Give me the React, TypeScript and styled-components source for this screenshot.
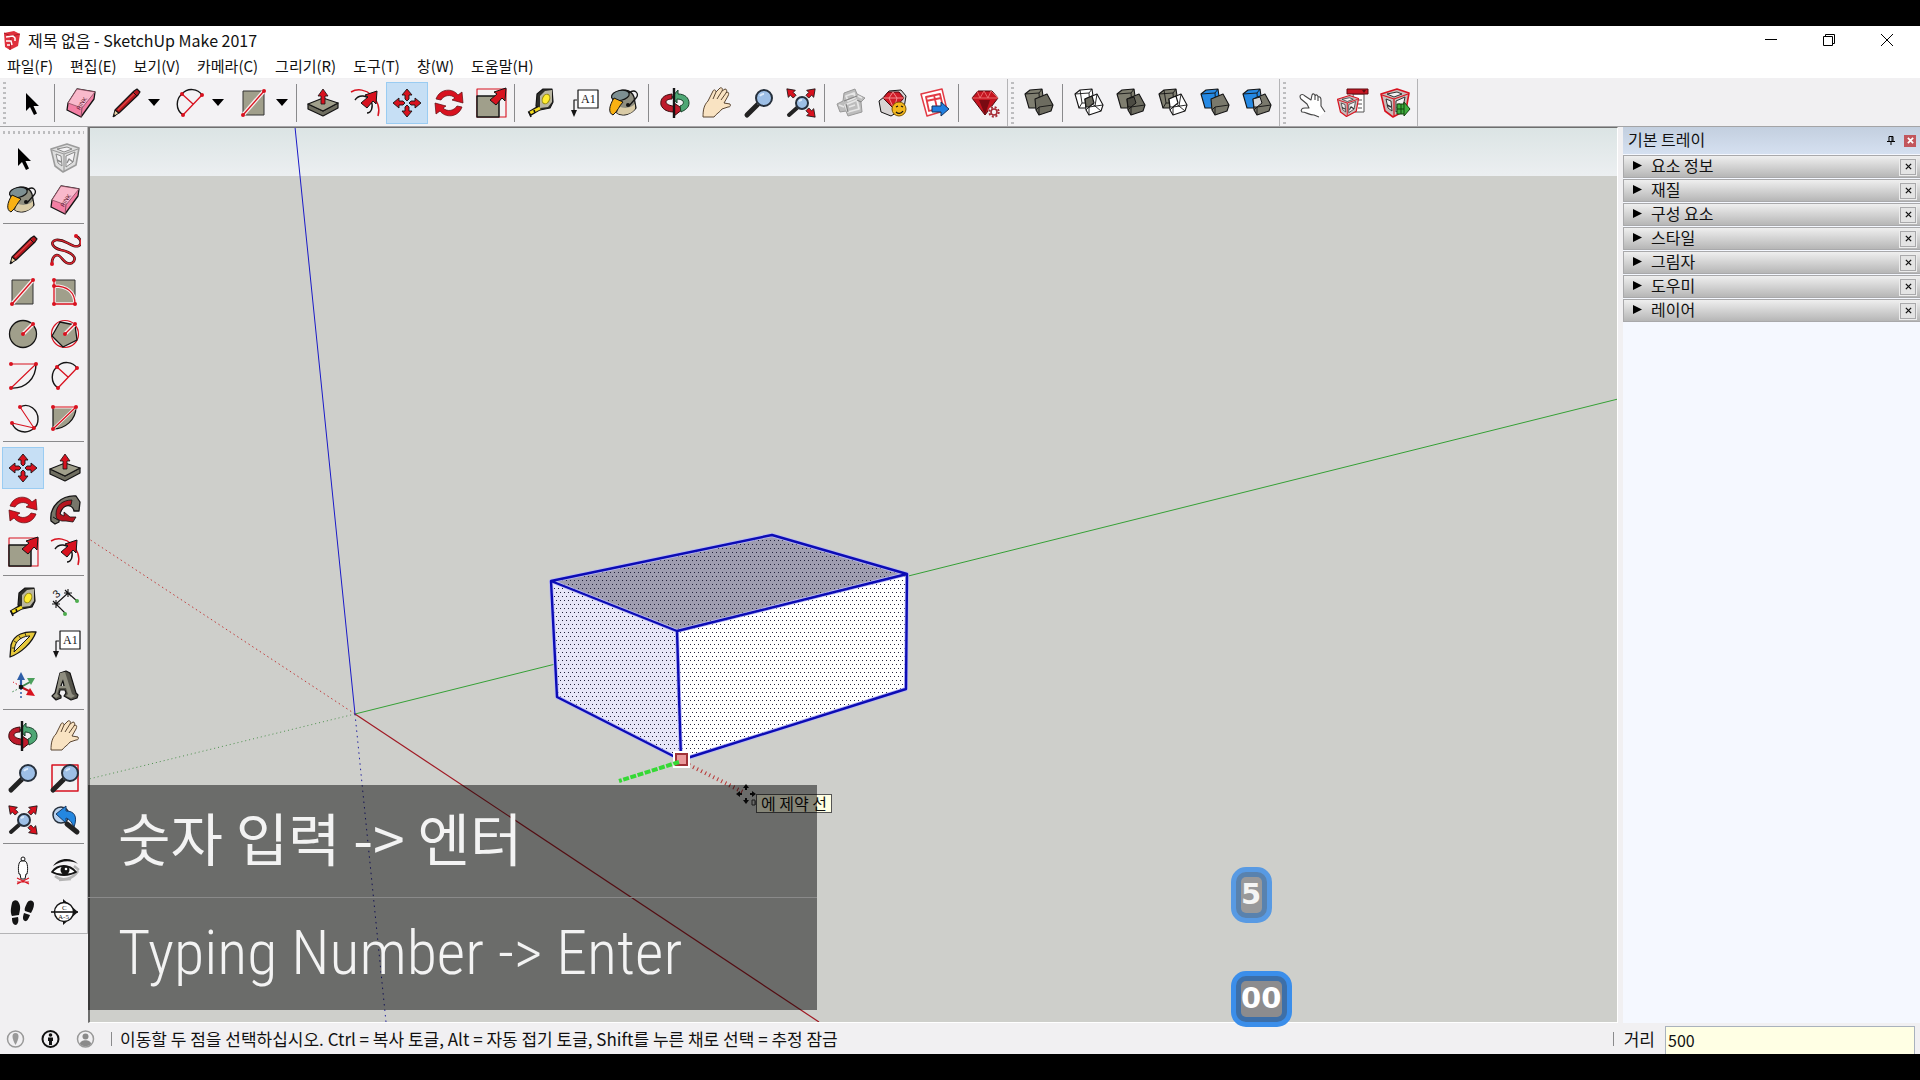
import React from "react";
import styled, { createGlobalStyle, css } from "styled-components";

const Global = createGlobalStyle`
  * { box-sizing: border-box; }
  body { margin: 0; background: #000; }
  button, input { font: inherit; color: inherit; }
  button { border: 0; padding: 0; background: none; }
`;

const UI = `"Noto Sans CJK KR", "Noto Sans", sans-serif`;

const Screen = styled.div`
  display: flex;
  flex-direction: column;
  min-height: 100vh;
  padding: 26px 0;
  background: #000;
  font-family: ${UI};
  font-size: 16px;
  color: #111;
`;
const Window = styled.div`
  display: flex;
  flex-direction: column;
  flex: 1;
  background: #f1f0f2;
`;

/* title and menu */
const TitleBar = styled.header`
  display: flex;
  align-items: center;
  height: 28px;
  padding: 0 4px 0 3px;
  background: #fff;
`;
const AppName = styled.h1`
  flex: 1;
  margin: 0 0 0 7px;
  font-size: 16px;
  line-height: 28px;
  font-weight: 400;
`;
const WindowButtons = styled.div`
  display: flex;
`;
const WindowButton = styled.button`
  display: grid;
  place-items: center;
  width: 58px;
  height: 28px;
`;
const MenuBar = styled.nav`
  display: flex;
  gap: 17px;
  height: 24px;
  padding-left: 7px;
  background: #fff;
`;
const MenuItem = styled.button`
  font-size: 15px;
  line-height: 24px;
  white-space: nowrap;
`;

/* toolbar */
const ToolBar = styled.div`
  display: flex;
  height: 49px;
  padding-top: 1px;
  border-bottom: 1px solid #a4a4a6;
`;
const BarGroup = styled.div`
  display: flex;
  align-items: center;
  padding: 0 1px 0 3px;
  background: #f3f2f4;
  border-right: 1px solid #b4b4b6;
`;
const Grip = styled.span<{ $wide?: boolean }>`
  flex: none;
  ${(p) =>
    p.$wide
      ? css`
          height: 3px;
          margin: 4px 3px 3px;
          background: repeating-linear-gradient(90deg, #bdbdbf 0 2px, transparent 2px 5px);
        `
      : css`
          width: 3px;
          height: 42px;
          margin-right: 4px;
          background: repeating-linear-gradient(180deg, #bdbdbf 0 2px, transparent 2px 5px);
        `}
`;
const Divider = styled.span<{ $across?: boolean }>`
  flex: none;
  background: #8a8a8c;
  ${(p) =>
    p.$across
      ? css`
          height: 1px;
          margin: 2px 3px 5px;
        `
      : css`
          width: 1px;
          height: 38px;
          margin: 0 5px 0 2px;
        `}
`;
const Tool = styled.button<{ $on?: boolean }>`
  display: grid;
  place-items: center;
  flex: none;
  width: 42px;
  height: 42px;
  border: 1px solid ${(p) => (p.$on ? "#9accf2" : "transparent")};
  background: ${(p) => (p.$on ? "#c6dff5" : "transparent")};
`;
const DropTool = styled.button`
  display: flex;
  align-items: center;
  flex: none;
  gap: 6px;
  width: 64px;
  height: 42px;
  padding-left: 8px;
`;

/* work area */
const Work = styled.div`
  display: flex;
  flex: 1;
`;
const Side = styled.aside`
  width: 88px;
`;
const ToolBox = styled.div`
  display: flex;
  flex-direction: column;
  background: #f3f2f4;
  border-right: 1px solid #b4b4b6;
  border-bottom: 1px solid #b4b4b6;
`;
const ToolGrid = styled.div`
  display: grid;
  grid-template-columns: 42px 42px;
  padding-left: 2px;
`;
const Scene = styled.main`
  position: relative;
  flex: 1;
  margin-right: 5px;
  border: solid;
  border-width: 1px 1px 1px 2px;
  border-color: #6e6e6e #fff #fff #6e6e6e;
  background: #cecfcb;
`;
const SceneDrawing = styled.svg`
  position: absolute;
  inset: 0;
  width: 100%;
  height: 100%;
`;
const Hint = styled.div`
  position: absolute;
  left: 666px;
  top: 666px;
  height: 19px;
  padding: 0 4px;
  border: 1px solid #555;
  background: #ffffe4;
  font-size: 16px;
  line-height: 16px;
`;
const Caption = styled.div`
  position: absolute;
  left: -2px;
  bottom: 12px;
  width: 729px;
  background: rgba(0, 0, 0, 0.48);
  color: #f3f3f3;
`;
const CaptionLine = styled.p<{ $latin?: boolean }>`
  margin: 0;
  height: 112px;
  padding-left: 30px;
  font: 400 57px/102px "Noto Sans CJK KR", sans-serif;
  white-space: nowrap;
  ${(p) =>
    p.$latin &&
    css`
      height: 113px;
      border-top: 1px solid #8a8a8a;
      font: 300 62px/110px "Roboto Condensed", sans-serif;
    `}
`;
const Keys = styled.div`
  position: absolute;
  left: 1141px;
  top: 739px;
  display: flex;
  flex-direction: column;
  align-items: flex-start;
  gap: 48px;
`;
const Key = styled.kbd<{ $faded?: boolean }>`
  padding: 5px;
  border: 5px solid #3b8eea;
  border-radius: 15px;
  background: #3d6fa8;
  opacity: ${(p) => (p.$faded ? 0.8 : 1)};
  span {
    display: block;
    height: 36px;
    padding-right: 1px;
    border-radius: 5px;
    background: #8c8c8e;
    color: #fff;
    font: 700 29px/34px "DejaVu Sans", sans-serif;
  }
`;

/* tray */
const Tray = styled.aside`
  width: 297px;
  background: #f5f8ff;
`;
const TrayHead = styled.div`
  display: flex;
  align-items: center;
  height: 27px;
  margin: 0 0 1px;
  padding: 0 4px 0 5px;
  background: linear-gradient(#c3cfdf, #d5e0f0);
`;
const TrayName = styled.h2`
  flex: 1;
  margin: 0;
  padding-bottom: 3px;
  font-size: 16px;
  line-height: 24px;
  font-weight: 400;
`;
const TrayButton = styled.button<{ $red?: boolean }>`
  display: grid;
  place-items: center;
  width: 12px;
  height: 12px;
  margin-left: 7px;
  background: ${(p) => (p.$red ? "#c2565c" : "transparent")};
`;
const Panel = styled.div`
  display: flex;
  align-items: center;
  height: 23px;
  margin-bottom: 1px;
  padding-right: 4px;
  border: 1px solid #a9a9ab;
  border-width: 1px 0 1px 1px;
  background: linear-gradient(#efefef, #b6b6b6);
`;
const PanelToggle = styled.button`
  display: flex;
  align-items: center;
  flex: 1;
  gap: 9px;
  padding: 0 0 3px 9px;
  font-size: 16px;
  line-height: 18px;
`;
const PanelClose = styled.button`
  display: grid;
  place-items: center;
  width: 16px;
  height: 16px;
  border: 1px solid #a9a9ab;
  outline: 1px solid #ededed;
  background: #e4e4e4;
`;

/* status */
const StatusBar = styled.footer`
  display: flex;
  align-items: center;
  height: 31px;
  padding: 0 5px 0 6px;
`;
const StatusButton = styled.button`
  width: 19px;
  height: 20px;
  margin-right: 16px;
`;
const StatusText = styled.span`
  flex: 1;
  padding-left: 8px;
  font-size: 17px;
  line-height: 30px;
  white-space: nowrap;
`;
const StatusRule = styled.span`
  width: 1px;
  height: 14px;
  background: #8a8a8c;
`;
const Measure = styled.label`
  display: flex;
  align-items: center;
  gap: 10px;
  margin-left: 10px;
  font-size: 17px;
`;
const MeasureBox = styled.input`
  width: 250px;
  height: 28px;
  margin-top: 3px;
  padding: 0 2px 2px;
  border: 1px solid #a9b2bd;
  border-bottom: 0;
  background: #ffffe4;
  font-size: 16px;
`;

const R = "#d8121f";
const K = "#141414";
const G = "#a09f8b";

function Svg({ children, size = 32 }: { children: React.ReactNode; size?: number }) {
  return (
    <svg width={size} height={size} viewBox="-16 -16 32 32" aria-hidden="true" fill="none" strokeLinejoin="round">
      {children}
    </svg>
  );
}
const Dots = ({ at }: { at: [number, number][] }) => (
  <>
    {at.map(([x, y], i) => (
      <circle key={i} cx={x} cy={y} r="2" fill={R} />
    ))}
  </>
);
const DiagArrow = ({ x = 0, y = 0 }) => (
  <path
    transform={`translate(${x} ${y})`}
    d="M0 0 L-12 4 L-9 6 L-16 12 L-10 17 L-4 10 L-1 13 Z"
    fill={R}
    stroke={K}
    strokeWidth="1"
  />
);
const Lens = ({ x = 5, y = -5, r = 8, w = 5 }) => (
  <>
    <path d={`M${x - r * 0.8} ${y + r * 0.8} L-12 12`} stroke="#222" strokeWidth={w} strokeLinecap="round" />
    <path d={`M${x - r * 0.8} ${y + r * 0.8} l3 -3`} stroke="#999" strokeWidth="2" />
    <circle cx={x} cy={y} r={r} fill="#9dbfe6" stroke="#26303c" strokeWidth="2" />
    <path d={`M${x - r / 2} ${y - r / 4} A${r / 2} ${r / 2} 0 0 1 ${x} ${y - r / 2}`} stroke="#d9e9fa" strokeWidth="2" />
  </>
);
const SmallArrow = ({ turn }: { turn: number }) => (
  <path transform={`rotate(${turn})`} d="M0 -20 L-5 -13 L-2 -13 V-9 H2 V-13 L5 -13 Z" fill={R} stroke={K} strokeWidth=".8" />
);
const Frame = ({ red = R, fill = "#c9bdbb", dark = "#333", s = 1, x = 0, y = 0 }) => (
  <g transform={`translate(${x} ${y}) scale(${s})`}>
    <path d="M-14 -9 L2 -14 L14 -10 L11 7 L-2 14 L-10 8 Z" fill={fill} stroke={red} strokeWidth="1.6" />
    <path d="M-8 -9 L2 -11 L7 -9 L-1 -6 Z M-9 -4 L-4 -2 L-3 8 L-7 5 Z M1 -2 L10 -6 L8 4 L1 9 Z" fill="#f3f2f4" stroke={dark} />
    <path d="M-13 -8 L-1 -4 L13 -9 M-1 -4 L-1 13" stroke={red} strokeWidth="1.2" />
    <path d="M2 5 L4 1 L8 4 M-8 2 L-4 4" stroke={dark} strokeWidth="1.4" />
  </g>
);
const Solids = ({ a, b, mid }: { a: string; b: string; mid?: string }) => (
  <>
    <path d="M-14 -9 L-9 -13 L3 -14 L5 0 L1 5 L-10 5 Z" fill={a} stroke={K} strokeWidth="1.1" />
    <path d="M-14 -9 L0 -10 L3 -14 M0 -10 L1 5" stroke={K} strokeWidth=".9" />
    <path d="M-4 -4 L8 -9 L14 2 L12 8 L0 12 L-3 7 Z" fill={b} stroke={K} strokeWidth="1.1" />
    <path d="M-3 7 L0 4 L14 2 M0 4 L0 12" stroke={K} strokeWidth=".9" />
    {mid && <path d="M-4 -4 L3 -6 L5 0 L0 4 L-3 4 Z" fill={mid} stroke={K} strokeWidth="1" />}
  </>
);
/* two overlapping blocks, one or both drawn as wire frames */
const WireSolids = ({ solid = false }: { solid?: boolean }) => (
  <>
    <path d="M-14 -9 L-9 -13 L3 -14 L5 0 L1 5 L-10 5 Z" fill={solid ? "#7f7e70" : "#fff"} stroke={K} strokeWidth="1.1" />
    <path d="M-14 -9 L0 -10 L3 -14 M0 -10 L1 5 M-9 -13 L-7 0 L5 0 M-7 0 L-10 5" stroke={K} strokeWidth=".9" />
    <path d="M-4 -4 L8 -9 L14 2 L12 8 L0 12 L-3 7 Z" fill="#fff" stroke={K} strokeWidth="1.1" />
    <path d="M-3 7 L0 4 L14 2 M0 4 L0 12 M0 4 L-4 -4 M8 -9 L6 3 L12 8 M-4 -4 L6 3" stroke={K} strokeWidth=".9" />
    <path d="M-4 -4 L3 -7 L5 0 L0 4 L-3 4 Z" fill={solid ? "#fff" : "#6b6a5f"} stroke={K} strokeWidth="1.2" />
  </>
);

const icons: Record<string, React.ReactNode> = {
  select: <path d="M-5 -10 V8 L-1 4 L3 12 L6 10.5 L2.5 3 H8 Z" fill="#000" />,
  eraser: (
    <>
      <path d="M-4 -14 L14 -11 L13 -4 L0 14 L-14 7 L-13 0 Z" fill="#f27fa4" stroke={K} strokeWidth="1.3" />
      <path d="M-4 -14 L14 -11 L1 5 L-13 0 Z" fill="#f9b9cb" stroke="#8c4c5f" strokeWidth=".8" />
      <path d="M1 5 L0 14" stroke="#8c4c5f" />
      <text x="-7" y="3" transform="rotate(-58)" fontSize="6" fontFamily="Liberation Sans, sans-serif" fill="#5a1830">
        PINK
      </text>
    </>
  ),
  pencil: (
    <>
      <path d="M-13 14 L-11 7 L-7 10 Z" fill="#e8d2a6" stroke={K} />
      <path d="M-11 7 L8 -12 L11 -14 L14 -11 L12 -8 L-7 10 Z" fill="#b3161c" stroke={K} strokeWidth="1.2" />
      <path d="M-8 7 L9 -10" stroke="#e04545" strokeWidth="1.2" />
      <path d="M-13 14 L-12 11 L-10 13 Z" fill={K} />
      <path d="M7 -11 L11 -7" stroke={K} />
    </>
  ),
  freehand: (
    <>
      <path
        d="M11 -14 C18 -10 17 -2 9 -4 C2 -6 -1 -11 -9 -10 C-16 -8 -12 -2 -4 0 C6 2 14 8 7 13 C-1 16 -3 5 -8 5 C-12 6 -13 10 -13 13"
        stroke="#3b0a0c"
        strokeWidth="2.6"
      />
      <path
        d="M11 -14 C18 -10 17 -2 9 -4 C2 -6 -1 -11 -9 -10 C-16 -8 -12 -2 -4 0 C6 2 14 8 7 13 C-1 16 -3 5 -8 5 C-12 6 -13 10 -13 13"
        stroke="#d62630"
        strokeWidth="1.4"
      />
      <Dots at={[[11, -14], [-13, 14]]} />
    </>
  ),
  rect: (
    <>
      <path d="M-11 -12 H10 V12 H-11 Z" fill={G} stroke="#333" />
      <path d="M-11 12 L10 -12" stroke="#f8eeee" strokeWidth="4" />
      <path d="M-11 12 L10 -12" stroke={R} strokeWidth="1.3" />
      <Dots at={[[-11, 12], [10, -12]]} />
    </>
  ),
  rotrect: (
    <>
      <path d="M-11 -12 H10 V12 H-11 Z" fill={G} stroke="#333" />
      <path d="M-11 -12 V12 H10 M-11 -6 C2 -6 10 0 10 12" stroke="#f8eeee" strokeWidth="3.5" />
      <path d="M-11 -12 V12 H10 M-11 -6 C2 -6 10 0 10 12" stroke={R} strokeWidth="1.3" />
      <Dots at={[[-11, -12], [-11, -6], [-11, 12], [10, 12]]} />
    </>
  ),
  circle: (
    <>
      <circle r="13.5" fill={G} stroke={K} strokeWidth="1.3" />
      <path d="M0 0 L10 -10" stroke="#f8eeee" strokeWidth="4" />
      <path d="M0 0 L10 -10" stroke={R} strokeWidth="1.3" />
      <Dots at={[[0, 0], [10, -10]]} />
    </>
  ),
  polygon: (
    <>
      <circle r="13.5" stroke={R} strokeWidth="1.2" />
      <path d="M-5 -12 L10 -9 L12 6 L-2 13 L-13 2 Z" fill={G} stroke={K} strokeWidth="1.3" />
      <path d="M0 0 L10 -10" stroke="#f8eeee" strokeWidth="4" />
      <path d="M0 0 L10 -10" stroke={R} strokeWidth="1.3" />
      <Dots at={[[0, 0], [10, -10]]} />
    </>
  ),
  arc: (
    <>
      <path d="M-12 12 C2 13 13 3 13 -12" stroke={K} strokeWidth="1.4" />
      <path d="M-12 -12 H13 L-12 12" stroke={R} strokeWidth="1.1" />
      <Dots at={[[-12, -12], [13, -12], [-12, 12]]} />
    </>
  ),
  arc2: (
    <>
      <path d="M-7 12 C-15 6 -14 -4 -8 -9 C-2 -16 8 -14 12 -8" stroke={K} strokeWidth="1.4" />
      <path d="M12 -8 L-7 12 M-8 -9 L3 1" stroke={R} strokeWidth="1.3" />
      <Dots at={[[-8, -9], [12, -8], [-7, 12]]} />
    </>
  ),
  arc3: (
    <>
      <path d="M-3 -11 C6 -16 15 -8 15 1 C15 5 14 8 11 10 C4 17 -8 14 -11 5" stroke={K} strokeWidth="1.4" />
      <path d="M-3 -11 L11 10 L-11 5" stroke={R} strokeWidth="1.1" />
      <Dots at={[[-3, -11], [11, 10], [-11, 5]]} />
    </>
  ),
  pie: (
    <>
      <path d="M-12 -11 H11 C11 2 0 11 -12 11 Z" fill={G} stroke={K} strokeWidth="1.2" />
      <path d="M-12 -11 H11 L-12 11" stroke="#f8eeee" strokeWidth="3" />
      <path d="M-12 -11 H11 L-12 11" stroke={R} strokeWidth="1.2" />
      <Dots at={[[-12, -11], [11, -11], [-12, 11]]} />
    </>
  ),
  move: (
    <>
      {[0, 90, 180, 270].map((t) => (
        <path key={t} transform={`rotate(${t})`} d="M0 -14 L-5 -8 H-2 V-4 L0 -2 L2 -4 V-8 H5 Z" fill={R} stroke={K} strokeWidth=".9" />
      ))}
    </>
  ),
  push: (
    <>
      <path d="M-15 1 L0 8 L15 0 V5 L0 13 L-15 6 Z" fill="#6f6e60" stroke={K} strokeWidth="1.2" />
      <path d="M-15 1 L0 -5 L15 0 L0 8 Z" fill={G} stroke={K} strokeWidth="1.2" />
      <path d="M0 -14 L-5 -7 H-2 V1 H2 V-7 H5 Z" fill={R} stroke={K} strokeWidth=".8" />
    </>
  ),
  rotate: (
    <>
      {[0, 180].map((t) => (
        <path
          key={t}
          transform={`rotate(${t})`}
          d="M-13 -4 C-9 -15 4 -15 9 -8 L13 -11 L14 0 L3 -3 L6 -5 C2 -9 -5 -8 -8 -3 Z"
          fill={R}
          stroke="#5a0a0e"
          strokeWidth=".7"
        />
      ))}
    </>
  ),
  follow: (
    <>
      <path d="M-14 11 C-16 -4 -3 -15 11 -14 L15 -8 L14 1 L9 1 C8 -4 4 -5 1 -4 C-4 -2 -6 4 -6 12 L-10 14 Z" fill="#77766a" stroke={K} strokeWidth="1.3" />
      <path d="M-9 4 C-9 -5 -2 -10 7 -10 L6 -5 C0 -5 -4 -2 -5 4 L-1 6 L-1 2 L5 7 L11 7 L8 12 L1 11 L-3 11 C-8 10 -9 8 -9 4 Z" fill="#b5151f" stroke={K} strokeWidth=".8" />
      <path d="M-12 7 L-7 10" stroke={K} />
    </>
  ),
  scale: (
    <>
      <path d="M-14 -14 H15 V14 H-14 Z" stroke={R} strokeWidth="1.1" />
      <path d="M-14 -7 H8 V14 H-14 Z" fill={G} stroke={K} strokeWidth="1.5" />
      <DiagArrow x={15} y={-15} />
    </>
  ),
  offset: (
    <>
      <path d="M-14 -11 C0 -19 18 -3 13 13" stroke={R} strokeWidth="1.5" />
      <path d="M-10 -3 C-6 -9 2 -8 6 -2 C9 4 6 10 2 10" stroke={K} strokeWidth="1.4" />
      <DiagArrow x={12} y={-12} />
    </>
  ),
  tape: (
    <>
      <path d="M-4 -9 L2 -14 L11 -14 L12 -1 L9 5 L-1 7 L-5 3 Z" fill="#2e2e2a" stroke={K} strokeWidth="1.2" />
      <path d="M-1 -7 L4 -12 L11 -13 L11 -1 L7 4 L-1 5 Z" fill="#b9b6a2" />
      <ellipse cx="5" cy="-4" rx="3.5" ry="5" fill="#ffec2e" stroke="#9a8d0c" transform="rotate(25 5 -4)" />
      <path d="M-2 5 L-12 11" stroke={K} strokeWidth="5" />
      <path d="M-1 5 L-11 10" stroke="#f5dd1e" strokeWidth="3" />
      <path d="M-12 9 L-10 14 M-7 7 l1 3" stroke={K} strokeWidth="1.6" />
    </>
  ),
  dim: (
    <>
      <path d="M-9 2 L3 -9 M-9 2 L0 11 M3 -9 L12 -1 M-13 2 H-5 M-12 -1 L-6 5 M-9 -2 V6 M-1 -9 H7 M0 -12 L6 -6 M3 -13 V-5" stroke={K} strokeWidth="1.1" />
      <circle cx="0" cy="12" r="2" fill="#4eae4e" />
      <circle cx="12" cy="-1" r="2" fill="#4eae4e" />
      <text x="-12" y="-5" transform="rotate(-40 -8 -9)" fontSize="11" fontFamily="Liberation Sans, sans-serif" fill={K}>
        3
      </text>
    </>
  ),
  protractor: (
    <>
      <path d="M-13 13 L-12 1 C-9 -10 2 -13 13 -12 C9 -1 -2 9 -13 13 Z" fill="#e6c93b" stroke={K} strokeWidth="1.3" />
      <path d="M-9 8 L-8 2 C-6 -5 1 -8 7 -8 Z" fill="#f3f2f4" stroke={K} strokeWidth="1" />
      <path d="M-11 4 l3 0 M-9 -3 l3 2 M-4 -8 l2 3 M2 -11 l1 3" stroke={K} strokeWidth=".8" />
    </>
  ),
  text: (
    <>
      <path d="M-6 -3 H-9 V9" stroke={K} strokeWidth="1.2" />
      <path d="M-12 7 H-6 L-9 14 Z" fill={K} />
      <path d="M-5 -13 H15 V5 H-5 Z" fill="#fff" stroke={K} strokeWidth="1.2" />
      <text x="-2" y="0" fontSize="12" fontFamily="Liberation Serif, serif" fill={K}>
        A1
      </text>
    </>
  ),
  axes: (
    <>
      <path d="M-2 1 V-10" stroke="#2f5fa8" strokeWidth="2.2" />
      <path d="M-2 -14 L-6 -6 H2 Z" fill="#2f5fa8" />
      <path d="M-2 1 L7 -4" stroke="#3d8a4d" strokeWidth="2" />
      <path d="M12 -8 L4 -8 L8 -1 Z" fill="#4ba05c" />
      <path d="M-2 1 L6 5" stroke="#c01720" strokeWidth="2" />
      <path d="M12 10 L7 2 L3 9 Z" fill={R} />
      <path d="M-3 0 L-10 -4" stroke={R} strokeDasharray="1.5 2" />
      <path d="M-3 2 L-11 6" stroke="#3d8a4d" strokeDasharray="1.5 2" />
      <path d="M-2 2 V12" stroke="#2f5fa8" strokeWidth="1.5" strokeDasharray="2 2" />
      <circle cx="-2" cy="1" r="2.3" fill={K} />
    </>
  ),
  text3d: (
    <>
      <path
        fillRule="evenodd"
        d="M-5 -13 L1 -15 L5 -13 L11 7 L13 9 L12 12 L6 14 L-1 10 L1 7 L0 4 L-5 4 L-6 8 L-4 10 L-4 12 L-9 14 L-13 10 L-10 7 Z M-2 -6 L-4 0 L-1 1 Z"
        fill="#55544b"
        stroke={K}
        strokeWidth="1.2"
      />
      <path fillRule="evenodd" d="M-5 -13 L0 -14 L7 8 L10 10 L6 12 L1 10 L3 8 L1 2 L-6 2 L-8 8 L-6 10 L-9 12 L-12 10 L-9 7 Z M-2 -7 L-5 0 L0 0 Z" fill="#8f8e80" />
    </>
  ),
  orbit: (
    <>
      <path d="M-3 -9 C-12 -8 -15 -4 -14 2 C-12 7 -7 9 -1 9 V13 L8 6 L-1 0 V3 C-5 3 -9 1 -9 -1 C-9 -3 -6 -4 -3 -4 Z" fill="#bd1a2a" stroke="#3b0a0c" />
      <path d="M3 -9 C10 -9 14 -5 14 0 C14 5 10 7 6 9 L5 3 C8 2 9 0 8 -2 C7 -3 5 -4 2 -4 V0 L-3 -6 L3 -13 Z" fill="#4ea774" stroke="#173f28" />
      <path d="M-1 -15 V15" stroke={K} strokeWidth="2.4" />
    </>
  ),
  pan: (
    <path
      d="M-14 14 C-14 7 -13 2 -9 -2 L-4 -12 C-3 -14 -1 -13 -1 -11 L3 -15 C5 -16 6 -14 5 -12 L8 -14 C10 -14 10 -12 9 -10 L10 -11 C12 -11 12 -9 11 -7 L7 0 L13 1 C14 3 13 4 11 4 L5 6 C2 10 0 10 -3 14 Z M-1 -11 L-4 -4 M5 -12 L0 -4 M9 -10 L4 -3"
      fill="#f9e3c2"
      stroke="#5a4632"
      strokeWidth="1"
    />
  ),
  zoom: <Lens />,
  zoomwin: (
    <>
      <path d="M-13 -13 H13 V13 H-13 Z" stroke={R} strokeWidth="1.5" />
      <Lens />
    </>
  ),
  extents: (
    <>
      {[-45, 45, 135].map((t) => (
        <SmallArrow key={t} turn={t} />
      ))}
      <Lens x={1} y={0} r={6} w={4} />
    </>
  ),
  previous: (
    <>
      <circle cx="-4" cy="-5" r="8" fill="#b9d2ee" stroke="#26303c" strokeWidth="1.5" />
      <path d="M-9 -6 L1 -14 V-9 C9 -9 13 -4 9 7 C6 1 4 -1 1 -2 V3 Z" fill="#2487e0" stroke="#173a66" />
      <path d="M2 4 L12 12" stroke="#222" strokeWidth="5" strokeLinecap="round" />
    </>
  ),
  position: (
    <>
      <circle cy="-11" r="2" fill="#fff" stroke={K} />
      <path d="M-2 -9 C-5 -8 -5 0 -4 4 L-3 4 L-2 9 H2 L3 4 L4 4 C5 0 5 -8 2 -9 Z" fill="#fff" stroke={K} />
      <path d="M-6 8 L6 14 M6 8 L-6 14 M-6 12 H6" stroke={R} strokeWidth="1.1" />
    </>
  ),
  look: (
    <>
      <path d="M-12 -4 C-7 -12 6 -14 13 -6 C7 -10 -4 -10 -12 -4 Z" fill={K} />
      <path d="M-10 6 C-3 12 8 9 13 1 M-6 10 L6 9 M9 -4 L14 0" stroke="#b4b4b4" strokeWidth="2.5" />
      <path d="M-13 2 C-7 -6 4 -6 11 2 C4 6 -6 6 -13 2 Z" fill="#fff" stroke={K} strokeWidth="1.8" />
      <circle cx="0" cy="0" r="4.5" fill={K} />
      <circle cx="1" cy="-1" r="1.3" fill="#fff" />
    </>
  ),
  walk: (
    <>
      <path d="M-11 -9 C-13 -1 -12 2 -11 4 L-4 3 C-3 -2 -2 -5 -4 -9 C-6 -13 -10 -12 -11 -9 Z M-11 6 L-5 5 C-4 9 -5 12 -7 13 C-10 13 -11 10 -11 6 Z" fill={K} />
      <path d="M4 -9 C6 -13 11 -12 11 -8 C11 -4 9 -1 8 1 L2 -1 C1 -4 3 -6 4 -9 Z M1 1 L7 3 C6 6 4 10 2 9 C-1 8 0 4 1 1 Z" fill={K} />
    </>
  ),
  section: (
    <>
      <path d="M-2 -13 L13 0 L-2 13 Z" fill={K} />
      <circle cx="-1" cy="0" r="9.5" fill="#fff" stroke={K} strokeWidth="1.4" />
      <path d="M-14 0 H13" stroke={K} strokeWidth="1.6" />
      <text x="-3" y="-2" fontSize="7" fontFamily="Liberation Serif, serif" fill={K}>
        C
      </text>
      <text x="-7" y="7" fontSize="7" fontFamily="Liberation Serif, serif" fill={K}>
        A-5
      </text>
    </>
  ),
  paint: (
    <g transform="translate(-2 0)">
      <path d="M-8 -9 C-2 -15 8 -14 11 -6 L13 5 C9 11 -1 14 -6 10 Z" fill="#8f8e80" stroke={K} strokeWidth="1.3" />
      <path d="M-4 3 C2 7 9 4 12 1 L12 6 C8 12 -1 13 -6 10 Z" fill="#d9cba6" />
      <ellipse cx="-1" cy="-8" rx="9" ry="5" transform="rotate(-12)" fill="#7d8f92" stroke={K} strokeWidth="1.2" />
      <path d="M-9 -5 L0 -1 C-4 3 -5 8 -10 12 C-15 10 -14 3 -9 -5 Z" fill="#f9b112" stroke={K} strokeWidth="1" />
      <path d="M6 -10 C12 -15 17 -9 13 -5 L6 3" stroke={K} strokeWidth="1.3" />
      <circle cx="5" cy="2" r="2" fill={K} />
    </g>
  ),
  component: <Frame red="#9c9c9c" fill="#dedede" dark="#8a8a8a" />,
  warehouse: (
    <>
      <path d="M-14 1 L-8 -2 L-7 -10 L4 -14 L6 -9 L14 -5 L10 -1 L11 9 L-3 13 L-5 8 L-11 9 Z" fill="#bdbdbd" stroke="#999" />
      <path d="M-5 -7 L3 -10 L4 -5 L-3 -2 Z M-6 2 L6 -3 L8 6 L-3 9 Z M-2 4 L4 2 M-12 2 L-7 4 M7 -7 L11 -5" stroke="#e6e6e6" strokeWidth="1.8" />
      <path d="M-7 -2 L6 -7 M-3 9 L-5 1 M6 -3 L10 -1" stroke="#858585" strokeWidth="1.2" />
    </>
  ),
  extension: (
    <>
      <path d="M-14 -2 L-9 -6 L-4 -12 L8 -13 L13 -7 L11 5 L-2 13 L-12 9 Z" fill="#d8d4d4" stroke={K} />
      <path d="M-10 -5 L-5 -11 H6 L11 -5 L1 6 Z" fill="#d11c28" stroke="#4b080c" />
      <path d="M-10 -5 H11 M-4 -5 L0 -11 L4 -5 L1 6 Z" stroke="#f59a9a" strokeWidth=".9" />
      <circle cx="6" cy="6" r="7" fill="#f4b81d" stroke="#7a5400" />
      <path d="M3 4 l2 -1 M8 3 l2 1 M3 9 C5 11 8 11 10 8" stroke={K} strokeWidth="1.3" />
    </>
  ),
  layout: (
    <>
      <path d="M-14 -9 L7 -14 L12 7 L-8 13 Z" fill="#fff" stroke="#e23a44" strokeWidth="1.5" />
      <path d="M-9 -6 L5 -9 L8 4 L-6 8 Z M-9 -2 L6 -5 M-1 -8 L2 5" stroke="#e23a44" strokeWidth="1.8" />
      <path d="M-3 3 H6 V-1 L14 6 L6 13 V9 H-3 Z" fill="#1f7fe0" stroke="#15315a" />
    </>
  ),
  ruby: (
    <>
      <path d="M-13 -5 L-7 -12 H7 L13 -5 L0 12 Z" fill="#c5141f" stroke="#4b080c" />
      <path d="M-13 -5 H13 L6 -12 L3 -5 L-1 -12 L-5 -5 L-8 -12" stroke="#f07a7a" strokeWidth=".8" />
      <path d="M-6 -3 L0 12 L5 -3 Z" fill="#7a0a12" />
      <circle cx="9" cy="9" r="3" stroke="#f3f2f4" strokeWidth="6" />
      <circle cx="9" cy="9" r="3" stroke="#a52a34" strokeWidth="1.6" />
      <circle cx="9" cy="9" r="4.7" stroke="#a52a34" strokeWidth="2" strokeDasharray="2 1.7" />
    </>
  ),
  outer: <Solids a="#7f7e70" b="#6d6c60" />,
  intersect: <WireSolids />,
  union: <Solids a="#7f7e70" b="#6d6c60" mid="#4c4b43" />,
  subtract: <WireSolids solid />,
  trim: <Solids a="#2589e4" b="#7a796c" />,
  split: <Solids a="#2589e4" b="#7a796c" mid="#d8d8d8" />,
  interact: (
    <>
      <path
        d="M-11 -7 C-10 -9 -8 -9 -6 -7 L0 -3 L1 -8 C2 -10 4 -9 4 -7 C5 -9 7 -8 7 -6 C9 -7 10 -5 10 -3 L10 3 L14 9 L8 14 L3 12 C-2 12 -5 9 -9 9 C-11 7 -9 5 -6 5 L-2 5 L-4 1 L-10 -4 C-11 -5 -11 -6 -11 -7 Z"
        fill="#fff"
      />
      <path
        d="M14 9 L10 3 L10 -3 C10 -5 9 -7 7 -6 C7 -8 5 -9 4 -7 C4 -9 2 -10 1 -8 L0 -3 L-6 -7 C-8 -9 -10 -9 -11 -7 C-11 -6 -11 -5 -10 -4 L-4 1 L-2 5 L-6 5 C-9 5 -11 7 -9 9 C-5 9 -2 12 3 12 L8 14 M4 -7 L4 -3 M7 -6 L7 -2"
        stroke="#444"
        strokeWidth="1.1"
      />
    </>
  ),
  options: (
    <>
      <path d="M0 -9 H11 V9 H2 Z" fill="#fff" stroke="#555" />
      <path d="M5 -3 H9 M5 1 H9 M5 5 H9" stroke="#555" />
      <Frame s={0.75} x={-5} y={3} />
      <path d="M-6 -14 H15 V-9 H-6 Z" fill="#c81722" stroke="#5d0b10" />
      <path d="M9 -13 h4 l-2 3 z" fill="#5d0b10" />
    </>
  ),
  attributes: (
    <>
      <Frame />
      <path d="M2 1 H9 V-1 L15 6 L9 13 V11 H2 Z" fill="#3fae3f" stroke="#12420f" />
      <path d="M2 6 H9 M6 1 V11 M9 1 V11" stroke="#12420f" />
    </>
  ),
};

const tool = (id: string, label: string, on = false) => (
  <Tool key={label} $on={on} aria-label={label}>
    <Svg>{icons[id]}</Svg>
  </Tool>
);
const drop = (id: string, label: string) => (
  <DropTool key={label} aria-label={label}>
    <Svg>{icons[id]}</Svg>
    <svg width="12" height="7" viewBox="0 0 12 7" aria-hidden="true">
      <path d="M0 0 H12 L6 7 Z" fill="#000" />
    </svg>
  </DropTool>
);

const menus = ["파일(F)", "편집(E)", "보기(V)", "카메라(C)", "그리기(R)", "도구(T)", "창(W)", "도움말(H)"];
const panels = ["요소 정보", "재질", "구성 요소", "스타일", "그림자", "도우미", "레이어"];
const boxes: [string, string][][] = [
  [["select", "선택"], ["component", "구성 요소 만들기"], ["paint", "페인트"], ["eraser", "지우개"]],
  [
    ["pencil", "선"], ["freehand", "자유곡선"], ["rect", "직사각형"], ["rotrect", "회전된 직사각형"], ["circle", "원"],
    ["polygon", "다각형"], ["arc", "호"], ["arc2", "2점 호"], ["arc3", "3점 호"], ["pie", "파이"],
  ],
  [["move", "이동"], ["push", "밀기/끌기"], ["rotate", "회전"], ["follow", "따라가기"], ["scale", "배율"], ["offset", "오프셋"]],
  [["tape", "줄자"], ["dim", "치수"], ["protractor", "각도기"], ["text", "텍스트"], ["axes", "축"], ["text3d", "3D 텍스트"]],
  [["orbit", "궤도"], ["pan", "이동 보기"], ["zoom", "확대/축소"], ["zoomwin", "확대/축소 창"], ["extents", "범위 확대/축소"], ["previous", "이전"]],
  [["position", "카메라 배치"], ["look", "둘러보기"], ["walk", "걷기"], ["section", "단면"]],
];

const Cross = ({ size = 7, color = "#111", w = 2 }) => (
  <svg width={size} height={size} viewBox="0 0 8 8" aria-hidden="true">
    <path d="M1 1 L7 7 M7 1 L1 7" stroke={color} strokeWidth={w} />
  </svg>
);

function Drawing() {
  return (
    <SceneDrawing viewBox="90 128 1527 894" preserveAspectRatio="xMinYMin slice" aria-hidden="true" fill="none">
      <defs>
        <linearGradient id="sky" x1="0" y1="0" x2="0" y2="1">
          <stop offset="0" stopColor="#dbe4e4" />
          <stop offset="1" stopColor="#eceff1" />
        </linearGradient>
        <pattern id="dots" width="4" height="8" patternUnits="userSpaceOnUse">
          <path d="M0 0 H1 V1 H0 Z M2 4 H3 V5 H2 Z" fill="#22223c" />
        </pattern>
      </defs>
      <rect x="89" y="127" width="1530" height="49" fill="url(#sky)" />
      <path d="M355 714 L1618 399" stroke="#35a035" />
      <path d="M355 714 L89 779" stroke="#4b8f4b" strokeDasharray="1 3" />
      <path d="M355 714 L819 1022" stroke="#a01a24" strokeWidth="1.2" />
      <path d="M355 714 L89 539" stroke="#c03a3a" strokeDasharray="1.5 3" />
      <path d="M355 714 L295 127" stroke="#1a1ac8" />
      <path d="M355 714 L386 1022" stroke="#2222a0" strokeDasharray="1.5 4" />
      <path d="M551 581 L772 535 L907 574 L677 631 Z" fill="#9f9db0" />
      <path d="M551 581 L677 631 L681 760 L557 697 Z" fill="#e7e6f8" />
      <path d="M677 631 L907 574 L906 689 L681 760 Z" fill="#fff" />
      <path d="M551 581 L772 535 L907 574 L906 689 L681 760 L557 697 Z" fill="url(#dots)" shapeRendering="crispEdges" />
      <path d="M551 581 L772 535 L907 574 L906 689 L681 760 L557 697 Z M551 581 L677 631 L907 574 M677 631 L681 760" stroke="#b9b9f5" strokeWidth="4" strokeLinejoin="round" />
      <path d="M551 581 L772 535 L907 574 L906 689 L681 760 L557 697 Z M551 581 L677 631 L907 574 M677 631 L681 760" stroke="#0c0cb4" strokeWidth="2.4" strokeLinejoin="round" />
      <path d="M681 761 L745 793" stroke="#b83030" strokeWidth="4" strokeDasharray="1 3.5" />
      <path d="M674 752 H689 V767 H674 Z" fill="#e88a8a" stroke="#fff" strokeWidth="2" />
      <path d="M676 754 H687 V765 H676 Z" fill="#ea9a9c" stroke="#a03238" strokeWidth="2" />
      <path d="M679 762 L619 781" stroke="#35d935" strokeWidth="4" strokeDasharray="6 1.5" />
      <g fill="#111">
        {[0, 90, 180, 270].map((t) => (
          <path key={t} transform={`translate(746 794) rotate(${t})`} d="M0 -10 L-3 -6 H-1 V-4 H1 V-6 H3 Z" />
        ))}
      </g>
      <path d="M752 800 h3 v5 h-3 z M756 801 v4" stroke="#333" />
    </SceneDrawing>
  );
}

export default function App() {
  return (
    <Screen>
      <Global />
      <Window>
        <TitleBar>
          <svg width="18" height="20" viewBox="0 0 18 20" aria-hidden="true">
            <path d="M1 3 L11 1 L17 4 L15 16 L7 20 L2 17 Z" fill="#e0303c" />
            <path d="M1 3 L8 6 L17 4 M8 6 L7 20" stroke="#a91a26" fill="none" />
            <path d="M3 7 L10 6 L12 8 V11 M3 11 L8 11 L9 15 M4 15 L7 15" stroke="#fff" strokeWidth="1.5" fill="none" />
          </svg>
          <AppName>제목 없음 - SketchUp Make 2017</AppName>
          <WindowButtons>
            <WindowButton aria-label="최소화">
              <svg width="12" height="12" viewBox="0 0 12 12"><path d="M0 5.5 H12" stroke="#000" /></svg>
            </WindowButton>
            <WindowButton aria-label="이전 크기로">
              <svg width="12" height="12" viewBox="0 0 12 12" fill="none" stroke="#000">
                <path d="M.5 2.5 H9.5 V11.5 H.5 Z M2.5 2.5 V.5 H11.5 V9.5 H9.5" />
              </svg>
            </WindowButton>
            <WindowButton aria-label="닫기">
              <svg width="12" height="12" viewBox="0 0 12 12"><path d="M0 0 L12 12 M12 0 L0 12" stroke="#000" /></svg>
            </WindowButton>
          </WindowButtons>
        </TitleBar>
        <MenuBar>
          {menus.map((m) => (
            <MenuItem key={m}>{m}</MenuItem>
          ))}
        </MenuBar>
        <ToolBar>
          <BarGroup>
            <Grip />
            {tool("select", "선택")}
            <Divider />
            {tool("eraser", "지우개")}
            {drop("pencil", "선")}
            {drop("arc2", "호")}
            {drop("rect", "도형")}
            <Divider />
            {tool("push", "밀기/끌기")}
            {tool("offset", "오프셋")}
            {tool("move", "이동", true)}
            {tool("rotate", "회전")}
            {tool("scale", "배율")}
            <Divider />
            {tool("tape", "줄자")}
            {tool("text", "텍스트")}
            {tool("paint", "페인트")}
            <Divider />
            {tool("orbit", "궤도")}
            {tool("pan", "이동 보기")}
            {tool("zoom", "확대/축소")}
            {tool("extents", "범위 확대/축소")}
            <Divider />
            {tool("warehouse", "3D Warehouse")}
            {tool("extension", "Extension Warehouse")}
            {tool("layout", "LayOut으로 보내기")}
            <Divider />
            {tool("ruby", "확장 관리자")}
          </BarGroup>
          <BarGroup>
            <Grip />
            {tool("outer", "외피")}
            <Divider />
            {tool("intersect", "교차")}
            {tool("union", "결합")}
            {tool("subtract", "빼기")}
            {tool("trim", "자르기")}
            {tool("split", "분할")}
          </BarGroup>
          <BarGroup>
            <Grip />
            {tool("interact", "상호작용")}
            {tool("options", "구성 요소 옵션")}
            {tool("attributes", "구성 요소 속성")}
          </BarGroup>
        </ToolBar>
        <Work>
          <Side>
            <ToolBox>
              <Grip $wide />
              {boxes.map((box, i) => (
                <React.Fragment key={i}>
                  {i > 0 && <Divider $across />}
                  <ToolGrid>{box.map(([id, label]) => tool(id, label, id === "move"))}</ToolGrid>
                </React.Fragment>
              ))}
            </ToolBox>
          </Side>
          <Scene>
            <Drawing />
            <Hint>에 제약 선</Hint>
            <Caption>
              <CaptionLine>숫자 입력 -&gt; 엔터</CaptionLine>
              <CaptionLine $latin>Typing Number -&gt; Enter</CaptionLine>
            </Caption>
            <Keys>
              <Key $faded><span>5</span></Key>
              <Key><span>00</span></Key>
            </Keys>
          </Scene>
          <Tray>
            <TrayHead>
              <TrayName>기본 트레이</TrayName>
              <TrayButton aria-label="고정">
                <svg width="8" height="9" viewBox="0 0 8 9" fill="none" stroke="#000">
                  <path d="M2 0.5 H6 V5.5 H2 Z M5 1 V5 M0 5.5 H8 M4 6 V9" />
                </svg>
              </TrayButton>
              <TrayButton $red aria-label="트레이 닫기">
                <Cross size={7} color="#fff" />
              </TrayButton>
            </TrayHead>
            {panels.map((p) => (
              <Panel key={p}>
                <PanelToggle>
                  <svg width="9" height="9" viewBox="0 0 9 9" aria-hidden="true"><path d="M0 0 L9 4.5 L0 9 Z" fill="#000" /></svg>
                  {p}
                </PanelToggle>
                <PanelClose aria-label={`${p} 닫기`}>
                  <Cross w={1.5} />
                </PanelClose>
              </Panel>
            ))}
          </Tray>
        </Work>
        <StatusBar>
          <StatusButton aria-label="위치">
            <svg width="19" height="20" viewBox="0 0 19 20" fill="none"><circle cx="9.5" cy="10" r="8" stroke="#999" strokeWidth="1.5" /><path d="M9.5 4 C14 4 13 10 9.5 16 C6 10 5 4 9.5 4 Z" fill="#999" /></svg>
          </StatusButton>
          <StatusButton aria-label="크레딧">
            <svg width="19" height="20" viewBox="0 0 19 20" fill="none"><circle cx="9.5" cy="10" r="8" stroke="#111" strokeWidth="2" /><circle cx="9.5" cy="6" r="1.8" fill="#111" /><path d="M7 8.5 H12 V12 H11 V16 H8 V12 H7 Z" fill="#111" /></svg>
          </StatusButton>
          <StatusButton aria-label="로그인">
            <svg width="19" height="20" viewBox="0 0 19 20" fill="none"><circle cx="9.5" cy="10" r="8" stroke="#999" strokeWidth="1.5" /><circle cx="9.5" cy="7.5" r="3" fill="#8a8a8a" /><path d="M4 15 C4 10 15 10 15 15 C12 18 7 18 4 15 Z" fill="#8a8a8a" /></svg>
          </StatusButton>
          <StatusRule />
          <StatusText>이동할 두 점을 선택하십시오. Ctrl = 복사 토글, Alt = 자동 접기 토글, Shift를 누른 채로 선택 = 추정 잠금</StatusText>
          <StatusRule />
          <Measure>
            거리
            <MeasureBox defaultValue="500" />
          </Measure>
        </StatusBar>
      </Window>
    </Screen>
  );
}
